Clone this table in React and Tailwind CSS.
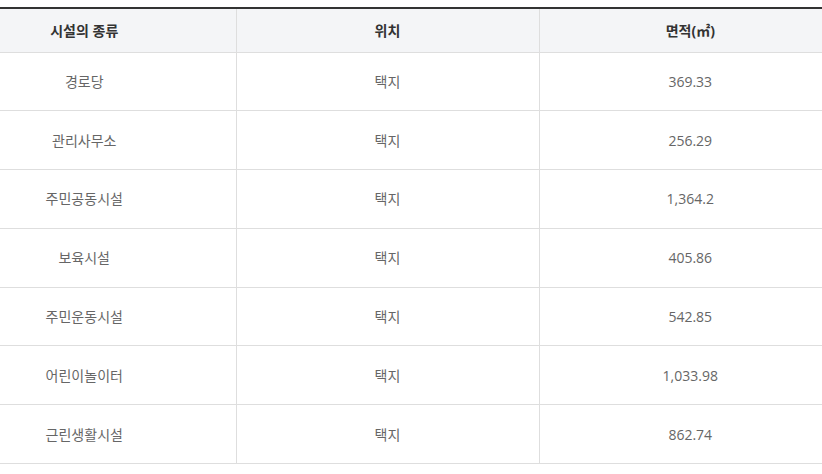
import React from "react";

const rows = [
  { name: "경로당", place: "택지", area: "369.33" },
  { name: "관리사무소", place: "택지", area: "256.29" },
  { name: "주민공동시설", place: "택지", area: "1,364.2" },
  { name: "보육시설", place: "택지", area: "405.86" },
  { name: "주민운동시설", place: "택지", area: "542.85" },
  { name: "어린이놀이터", place: "택지", area: "1,033.98" },
  { name: "근린생활시설", place: "택지", area: "862.74" },
];

const App = () => {
  return (
    <div className="w-[822px] h-[474px] overflow-hidden bg-white pt-[7px] font-['Open_Sans','Noto_Sans_CJK_KR',sans-serif]">
      {/* table is wider than the view, cropped on both sides */}
      <table className="ml-[-67px] w-[908px] table-fixed border-collapse border-t-2 border-[#333] text-[14px]">
        <colgroup>
          <col className="w-[303px]" />
          <col className="w-[303px]" />
          <col className="w-[302px]" />
        </colgroup>
        <thead>
          <tr className="h-[44px] bg-[#f4f5f7] border-b border-[#dedede]">
            <th className="border-r border-[#dedede] text-center font-bold text-[#333]">시설의 종류</th>
            <th className="border-r border-[#dedede] text-center font-bold text-[#333]">위치</th>
            <th className="text-center font-bold text-[#333]">면적(㎡)</th>
          </tr>
        </thead>
        <tbody>
          {rows.map((r) => (
            <tr key={r.name} className="h-[58.8px] border-b border-[#dedede]">
              <td className="border-r border-[#dedede] text-center text-[#666]">{r.name}</td>
              <td className="border-r border-[#dedede] text-center text-[#666]">{r.place}</td>
              <td className="text-center text-[#666]">{r.area}</td>
            </tr>
          ))}
        </tbody>
      </table>
    </div>
  );
};

export default App;
